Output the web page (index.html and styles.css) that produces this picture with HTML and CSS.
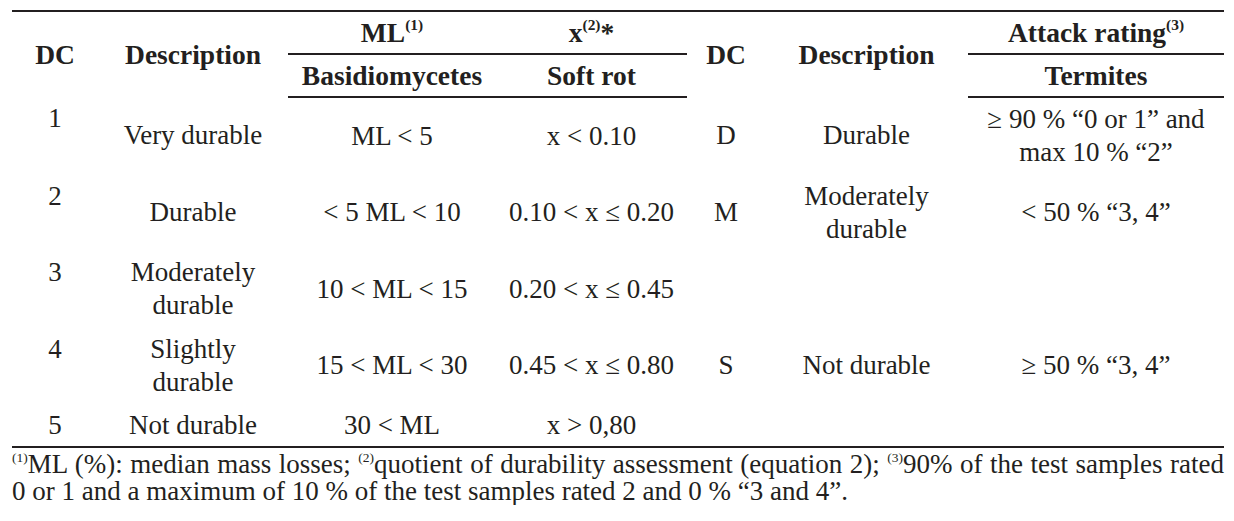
FILE: index.html
```html
<!DOCTYPE html>
<html lang="en">
<head>
<meta charset="utf-8">
<title>Durability classes</title>
<link rel="stylesheet" href="styles.css">
</head>
<body>
<div class="page">
  <table class="dur">
    <colgroup>
      <col class="c-dc"><col class="c-desc"><col class="c-ml"><col class="c-x"><col class="c-dc2"><col class="c-desc2"><col class="c-att">
    </colgroup>
    <thead>
      <tr class="h1">
        <th rowspan="2">DC</th>
        <th rowspan="2">Description</th>
        <th class="sub">ML<sup>(1)</sup></th>
        <th class="sub">x<sup>(2)</sup>*</th>
        <th rowspan="2">DC</th>
        <th rowspan="2">Description</th>
        <th class="sub">Attack rating<sup>(3)</sup></th>
      </tr>
      <tr class="h2">
        <th>Basidiomycetes</th>
        <th>Soft rot</th>
        <th>Termites</th>
      </tr>
    </thead>
    <tbody>
      <tr>
        <td class="num">1</td>
        <td>Very durable</td>
        <td>ML &lt; 5</td>
        <td>x &lt; 0.10</td>
        <td>D</td>
        <td>Durable</td>
        <td>≥ 90 % “0 or 1” and<br>max 10 % “2”</td>
      </tr>
      <tr>
        <td class="num">2</td>
        <td>Durable</td>
        <td>&lt; 5 ML &lt; 10</td>
        <td>0.10 &lt; x ≤ 0.20</td>
        <td>M</td>
        <td>Moderately<br>durable</td>
        <td>&lt; 50 % “3, 4”</td>
      </tr>
      <tr>
        <td class="num">3</td>
        <td>Moderately<br>durable</td>
        <td>10 &lt; ML &lt; 15</td>
        <td>0.20 &lt; x ≤ 0.45</td>
        <td></td>
        <td></td>
        <td></td>
      </tr>
      <tr>
        <td class="num">4</td>
        <td>Slightly<br>durable</td>
        <td>15 &lt; ML &lt; 30</td>
        <td>0.45 &lt; x ≤ 0.80</td>
        <td>S</td>
        <td>Not durable</td>
        <td>≥ 50 % “3, 4”</td>
      </tr>
      <tr class="last">
        <td class="num">5</td>
        <td>Not durable</td>
        <td>30 &lt; ML</td>
        <td>x &gt; 0,80</td>
        <td></td>
        <td></td>
        <td></td>
      </tr>
    </tbody>
  </table>
  <p class="note"><sup>(1)</sup>ML (%): median mass losses; <sup>(2)</sup>quotient of durability assessment (equation 2); <sup>(3)</sup>90% of the test samples rated 0 or 1 and a maximum of 10 % of the test samples rated 2 and 0 % “3 and 4”.</p>
</div>
</body>
</html>
```

FILE: styles.css
```css
html, body {
  margin: 0;
  padding: 0;
  background: #ffffff;
}

.page {
  padding: 10px 10px 0 12px;
  font-family: "Liberation Serif", Tinos, "Times New Roman", Times, "Nimbus Roman", "DejaVu Serif", serif;
  color: #231f20;
}

.dur {
  width: 1212px;
  table-layout: fixed;
  border-collapse: collapse;
  border-top: 2px solid #231f20;
  border-bottom: 2px solid #231f20;
  font-family: inherit;
}

.c-dc { width: 86px; }
.c-desc { width: 190px; }
.c-ml { width: 208px; }
.c-x { width: 191px; }
.c-dc2 { width: 78px; }
.c-desc2 { width: 203px; }
.c-att { width: 256px; }

.dur th {
  font-family: inherit;
  font-weight: bold;
  font-size: 27.5px;
  line-height: 33px;
  padding: 4px 4px;
  text-align: center;
  vertical-align: middle;
  white-space: nowrap;
}

.dur th.sub {
  border-bottom: 2px solid #231f20;
}

.dur thead .h2 th {
  border-bottom: 2px solid #231f20;
}

.dur td {
  font-family: inherit;
  font-size: 27px;
  line-height: 33px;
  padding: 5px 4px 5.5px;
  text-align: center;
  vertical-align: middle;
  white-space: nowrap;
}

.dur td.num {
  vertical-align: top;
}

.dur .last td {
  padding-bottom: 4px;
}

sup {
  font-size: 0.56em;
  line-height: 0;
  vertical-align: 0.75em;
}

.note {
  margin: 3px 0 0;
  width: 1212px;
  font-family: inherit;
  font-size: 27px;
  line-height: 27px;
  text-align: justify;
}

.note sup {
  font-size: 0.5em;
  vertical-align: 0.8em;
}
```
